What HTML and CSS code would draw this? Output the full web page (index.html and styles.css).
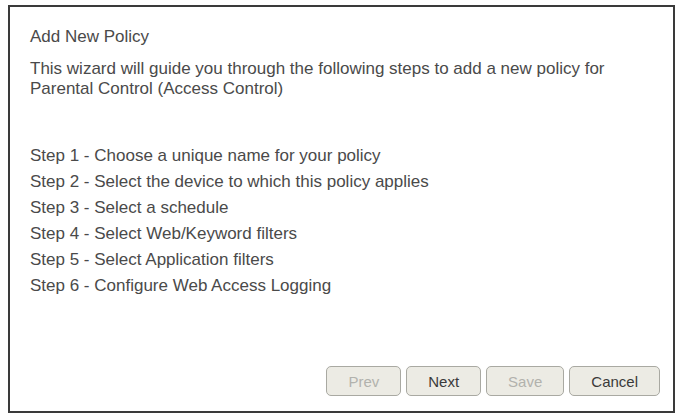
FILE: index.html
```html
<!DOCTYPE html>
<html>
<head>
<meta charset="utf-8">
<link rel="stylesheet" href="styles.css">
</head>
<body>
<div class="wizard">
  <div class="title">Add New Policy</div>
  <p class="intro">This wizard will guide you through the following steps to add a new policy for<br>Parental Control (Access Control)</p>
  <ul class="steps">
    <li>Step 1 - Choose a unique name for your policy</li>
    <li>Step 2 - Select the device to which this policy applies</li>
    <li>Step 3 - Select a schedule</li>
    <li>Step 4 - Select Web/Keyword filters</li>
    <li>Step 5 - Select Application filters</li>
    <li>Step 6 - Configure Web Access Logging</li>
  </ul>
  <div class="actions">
    <button class="btn" disabled>Prev</button>
    <button class="btn">Next</button>
    <button class="btn" disabled>Save</button>
    <button class="btn">Cancel</button>
  </div>
</div>
</body>
</html>
```
FILE: styles.css
```css
html, body {
  margin: 0;
  padding: 0;
  background: #ffffff;
}
body {
  padding: 5px 0 0 8px;
  font-family: "Liberation Sans", Arial, sans-serif;
  color: #4a4a4a;
}
.wizard {
  box-sizing: border-box;
  width: 667px;
  height: 408px;
  border: 2px solid #3a3a3a;
  padding: 20px 13px 15px 20px;
  display: flex;
  flex-direction: column;
  font-size: 17px;
}
.title {
  line-height: 20px;
}
.intro {
  margin: 12px 0 0 0;
  line-height: 20px;
}
.steps {
  list-style: none;
  margin: 44px 0 0 0;
  padding: 0;
  line-height: 26px;
}
.actions {
  margin-top: auto;
  display: flex;
  justify-content: flex-end;
  gap: 5px;
}
.btn {
  box-sizing: border-box;
  height: 30px;
  padding: 0 21px;
  font-family: "Liberation Sans", Arial, sans-serif;
  font-size: 15px;
  color: #3a3a3a;
  background: #ecebe4;
  border: 1px solid #a9a9a2;
  border-radius: 5px;
}
.btn:disabled {
  color: #b2b2ad;
}
```
